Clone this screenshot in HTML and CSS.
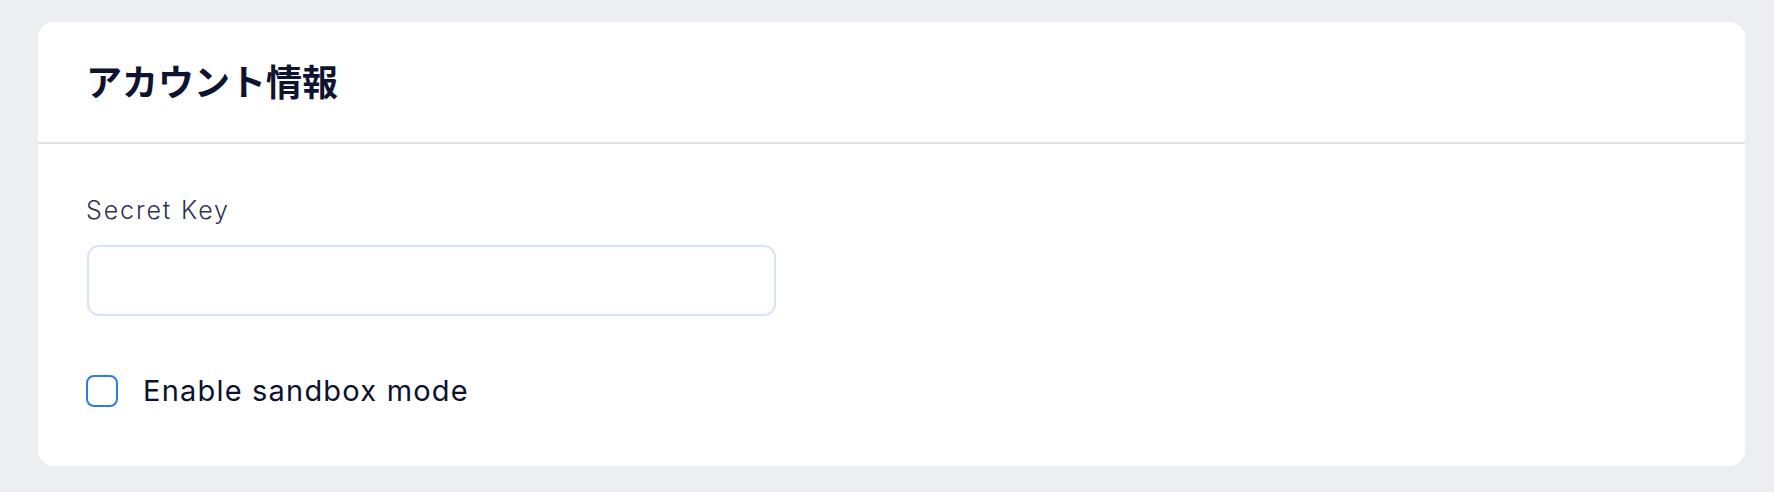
FILE: index.html
```html
<!DOCTYPE html>
<html lang="ja">
<head>
<meta charset="utf-8">
<link rel="stylesheet" href="styles.css">
</head>
<body>
<section class="card">
  <header class="card-header">
    <h2 class="card-title">アカウント情報</h2>
  </header>
  <div class="card-body">
    <label class="field">
      <span class="field-label">Secret Key</span>
      <input class="field-input" type="text">
    </label>
    <label class="check">
      <span class="check-box"></span>
      <span class="check-text">Enable sandbox mode</span>
    </label>
  </div>
</section>
</body>
</html>
```
FILE: styles.css
```css
html, body {
  margin: 0;
  padding: 0;
}
body {
  background: #edeef2;
  font-family: Inter, "Noto Sans", "Noto Sans CJK JP", sans-serif;
  padding: 22px 29px 26px 38px;
}
.card {
  background: #ffffff;
  border-radius: 16px;
  height: 444px;
  display: flex;
  flex-direction: column;
}
.card-header {
  height: 122px;
  display: flex;
  align-items: center;
  padding: 0 48px 4px 48px;
  box-sizing: border-box;
  border-bottom: 2px solid #dfe3e9;
}
.card-title {
  margin: 0;
  font-family: "Noto Sans CJK JP", sans-serif;
  font-weight: 700;
  font-size: 36px;
  color: #0e1330;
  line-height: 1;
}
.card-body {
  padding: 50px 48px 0 48px;
  display: flex;
  flex-direction: column;
}
.field {
  display: flex;
  flex-direction: column;
  gap: 19px;
}
.field-label {
  font-size: 25px;
  line-height: 32px;
  letter-spacing: 1.9px;
  font-weight: 300;
  color: #2e3350;
}
.field-input {
  box-sizing: border-box;
  width: 689px;
  height: 71px;
  border: 2px solid #d6e4f7;
  border-radius: 12px;
  background: #fff;
  outline: none;
  margin: 0 0 0 1px;
}
.check {
  display: flex;
  align-items: center;
  gap: 25px;
  margin-top: 57px;
}
.check-box {
  box-sizing: border-box;
  width: 32px;
  height: 32px;
  border: 2px solid #2d7be6;
  border-radius: 8px;
}
.check-text {
  font-size: 29px;
  line-height: 36px;
  letter-spacing: 1.2px;
  color: #0b1130;
}
```
